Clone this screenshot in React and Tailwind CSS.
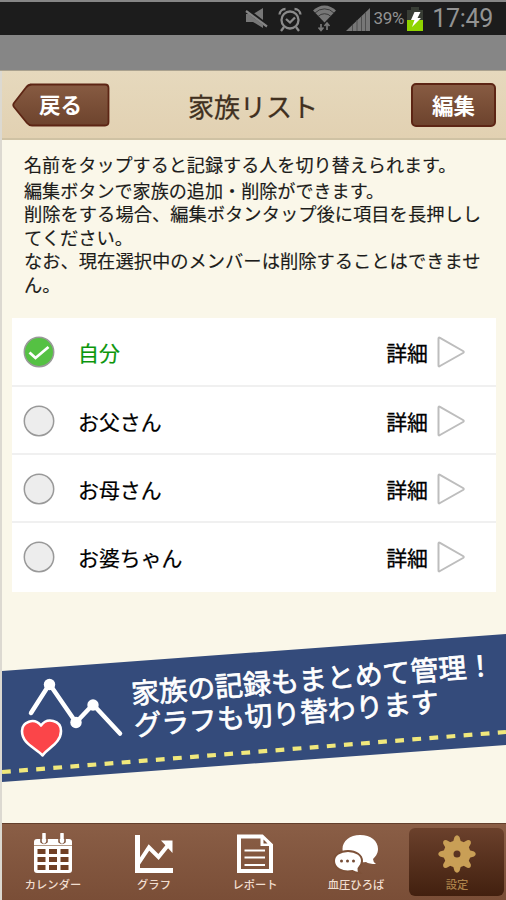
import React from "react";

const MEMBERS = [
  { name: "自分", selected: true },
  { name: "お父さん" },
  { name: "お母さん" },
  { name: "お婆ちゃん" },
];

function StatusBar() {
  return (
    <div className="mt-[2px] flex h-[33px] items-center justify-end bg-[#1c1c1c] pr-[13px] font-[Roboto,sans-serif] text-[#939393]">
      <svg width="128" height="33" viewBox="243 2 128 33" className="mr-[1px] shrink-0" fill="none">
        <path d="M244 14h7l10-6v20l-10-6h-7z" fill="#777" />
        <path d="M244 9.500l21 16" stroke="#1c1c1c" strokeWidth="4" />
        <path d="M244 11l21 15.500" stroke="#858585" strokeWidth="2.200" />
        <g stroke="#8a8a8a" strokeWidth="2.300">
          <circle cx="288" cy="20" r="8.500" />
          <path d="M277.500 14.500a6 6 0 0 1 6-5.500M292.500 9a6 6 0 0 1 6 5.500M282 27l-3 4M294 27l3 4M284 19l4 3.500l5-5" />
        </g>
        <path d="M311 10.500a16 16 0 0 1 23 0l-11.500 12z" fill="#777" />
        <path d="M313 13a13 13 0 0 1 19 0M316 16.500a9 9 0 0 1 13 0" stroke="#333" strokeWidth="0.900" />
        <path d="M319 24v6M316.500 27.500l2.500 3l2.500-3M325 30v-7M322.500 26l2.500-3l2.500 3" stroke="#777" strokeWidth="1.700" />
        <path d="M344 31L368 8v23z" fill="#777" />
        <path d="M350.500 25v6M355 20v11M359.500 16v15M363.500 12v19" stroke="#505050" strokeWidth="1" />
      </svg>
      <span className="text-[17px] leading-none tracking-[-0.3px]">39%</span>
      <svg width="18" height="28" viewBox="0 0 18 28" className="ml-[2px] mr-[8px] shrink-0">
        <path d="M5 2h8v3h4v10H1V5h4z" fill="#383d35" />
        <path d="M1 15h16v11H1z" fill="#8fd400" />
        <path d="M8.500 7h6l-3 6h3.500L6 22l2.500-7H5z" fill="#fff" />
      </svg>
      <span className="text-[25px] leading-none tracking-[-0.300px]">17:49</span>
    </div>
  );
}

function Header() {
  return (
    <header className="flex h-[69px] items-center justify-between border-b-2 border-[#cfc2a4] bg-gradient-to-b from-[#e6d9bd] to-[#e2d1b2] pl-[10px] pr-[10px]">
      <button className="relative flex h-[44px] w-[98px] items-center pb-[1px] pl-[27px] text-[21.500px] leading-none font-bold text-white">
        <svg className="absolute inset-0" width="98" height="44" viewBox="0 0 98 44">
          <defs>
            <linearGradient id="back" x1="0" y1="0" x2="0" y2="1">
              <stop offset="0" stopColor="#875b42" />
              <stop offset="1" stopColor="#6d432d" />
            </linearGradient>
          </defs>
          <path d="M18 1.500H93Q96.500 1.500 96.500 5V39Q96.500 42.500 93 42.500H20Q17 42.500 15 40L2 24Q.5 22 2 20L14 4.500Q16 1.500 20 1.500z" fill="url(#back)" stroke="#5d2514" strokeWidth="1.800" />
        </svg>
        <span className="relative">戻る</span>
      </button>
      <h1 className="mr-[15px] pt-[2px] text-[26px] leading-none text-[#40301f] [-webkit-text-stroke:0.3px]">家族リスト</h1>
      <button className="flex h-[44px] w-[85px] items-center justify-center rounded-[5px] border-2 border-[#5d2514] bg-gradient-to-b from-[#875b42] to-[#6d432d] text-[21.500px] leading-none font-bold text-white">
        編集
      </button>
    </header>
  );
}

function MemberRow({ name, selected }) {
  return (
    <li className="flex h-[68.300px] items-center border-b-2 border-[#f0f0f0] pt-[1px] pl-[11px] pr-[31px] last:border-white">
      <svg width="32" height="32" viewBox="0 0 32 32">
        <circle cx="16" cy="16" r="14.700" fill={selected ? "#55c143" : "#ededed"} stroke="#999" strokeWidth="1.500" />
        {selected && <path d="M6.500 16.500l6 5.500L25.500 11" fill="none" stroke="#fff" strokeWidth="2.800" />}
      </svg>
      <span className={"ml-[23px] pt-[1px] text-[20.900px] leading-none [-webkit-text-stroke:0.2px] " + (selected ? "text-[#0b960b]" : "text-black")}>{name}</span>
      <span className="ml-auto pt-[1px] text-[20.900px] leading-none text-black [-webkit-text-stroke:0.3px]">詳細</span>
      <svg width="28" height="32" viewBox="0 0 28 32" className="ml-[9px]">
        <path d="M1.500 2.500Q1.500 1 3 1.800L26 15Q27.500 16 26 17L3 30Q1.500 31 1.500 29.500z" fill="none" stroke="#bdbdbd" strokeWidth="2" />
      </svg>
    </li>
  );
}

function Banner() {
  return (
    <section className="relative mt-[42px] h-[149px] overflow-hidden">
      <svg className="absolute inset-0" width="504" height="149" viewBox="2 634 504 149">
        <path d="M2 671L506 634V745L2 782z" fill="#344b7b" />
        <path d="M2 772L506 732" stroke="#f0e87c" strokeWidth="4.200" strokeDasharray="8.800 8.350" />
        <path d="M31 713L49.500 684L76 722.500L93 704.500L120 733.500" fill="none" stroke="#fff" strokeWidth="4.500" strokeLinecap="round" />
        <g fill="#fff">
          <circle cx="49.500" cy="684.500" r="5.700" />
          <circle cx="76" cy="722.500" r="5.700" />
          <circle cx="93" cy="705" r="5.700" />
        </g>
        <path d="M42.500 755.500C36 748 22 744 22 731C22 722 34 717 41 725.500C47 717 61 720 61 731C61 743 48 748 42.500 755.500z" fill="#fb4549" stroke="#fff" strokeWidth="2.600" strokeLinejoin="round" />
      </svg>
      <div className="absolute top-[43px] left-[128px] origin-top-left -rotate-[4.500deg] text-[28px] leading-[31.500px] whitespace-nowrap text-white [-webkit-text-stroke:0.7px]">
        <p>家族の記録もまとめて管理！</p>
        <p className="text-[27.800px]">グラフも切り替わります</p>
      </div>
    </section>
  );
}

function CalendarIcon() {
  return (
    <svg width="40" height="42" viewBox="0 0 40 42">
      <path d="M4 6H36Q39 6 39 9V37Q39 40 36 40H4Q1 40 1 37V9Q1 6 4 6z" fill="#fff" />
      <path d="M1 12.500h38" stroke="#b59a86" strokeWidth="1" />
      <path d="M8 6v3q3 3 6 0V6M26 6v3q3 3 6 0V6" fill="none" stroke="#7d5138" strokeWidth="1.500" />
      <path d="M11 1v8M29 1v8" stroke="#fff" strokeWidth="3.500" strokeLinecap="round" />
      <path d="M4.500 16h8v5h-8zM16 16h8v5h-8zM27.500 16h8v5h-8zM4.500 24h8v5h-8zM16 24h8v5h-8zM27.500 24h8v5h-8zM4.500 32h8v5h-8zM16 32h8v5h-8zM27.500 32h8v5h-8z" fill="#704025" />
    </svg>
  );
}

function ChartIcon() {
  return (
    <svg width="40" height="42" viewBox="0 0 40 42" fill="none" stroke="#fff">
      <path d="M3.500 2V37.500H39" strokeWidth="5" />
      <path d="M4 31L15 14.500L24.500 24L35 11" strokeWidth="4" />
      <path d="M27 7.500H38.500V20z" fill="#fff" stroke="none" />
    </svg>
  );
}

function ReportIcon() {
  return (
    <svg width="40" height="42" viewBox="0 0 40 42" fill="none" stroke="#fff">
      <path d="M4 3.500H27L36 12V38H4z" strokeWidth="4" />
      <path d="M25.500 2V13H37z" fill="#fff" stroke="none" />
      <path d="M28.500 6.500v4h4z" fill="#7d5138" stroke="none" />
      <path d="M9.500 17.500H30M9.500 24.500H30M9.500 32H30" strokeWidth="2.200" />
    </svg>
  );
}

function ChatIcon() {
  return (
    <svg width="46" height="42" viewBox="0 0 46 42" fill="#fff">
      <path d="M27 2C38 2 45 8 45 16C45 21 42 24 40 26Q40 29 43 31Q36 31 33 29Q27 30 21 28C13 26 9.500 21 9.500 16C9.500 8 17 2 27 2z" />
      <path d="M15 18C23 18 29 22 29 28C29 31 28 33 25.500 35.500Q25 38 27 40Q22 40 19.500 38C9 40 1 35 1 28C1 22 7 18 15 18z" stroke="#7d5138" strokeWidth="2" />
      <g fill="#754c36">
        <circle cx="8.500" cy="28" r="1.500" />
        <circle cx="14.500" cy="28" r="1.500" />
        <circle cx="20.500" cy="28" r="1.500" />
      </g>
    </svg>
  );
}

function GearIcon() {
  const teeth = [0, 45, 90, 135, 180, 225, 270, 315];
  return (
    <svg width="40" height="42" viewBox="0 0 40 42" fill="#c99f56">
      {teeth.map((a) => (
        <path key={a} d="M15.500 11L17.500 4Q20 .5 22.500 4L24.500 11z" transform={`rotate(${a} 20 21)`} />
      ))}
      <circle cx="20" cy="21" r="8.500" fill="none" stroke="#c99f56" strokeWidth="10" />
    </svg>
  );
}

const TABS = [
  { label: "カレンダー", Icon: CalendarIcon },
  { label: "グラフ", Icon: ChartIcon },
  { label: "レポート", Icon: ReportIcon },
  { label: "血圧ひろば", Icon: ChatIcon },
  { label: "設定", Icon: GearIcon, active: true },
];

function TabBar() {
  return (
    <nav className="mt-auto h-[77px] border-t border-[#64402d] bg-gradient-to-b from-[#8a5e46] to-[#7a4e37]">
      <div className="grid h-full w-[505px] grid-cols-5">
        {TABS.map(({ label, Icon, active }) => (
          <div key={label} className="flex px-[3px] pt-[4px] pb-[4px]">
            <div
              className={
                "flex flex-1 flex-col items-center rounded-[6px] pt-[5px] pl-[1px] text-[11.300px] leading-none font-medium " +
                (active ? "bg-gradient-to-b from-[#6b412c] to-[#42200f] text-[#ac8149]" : "text-[#f1ded0]")
              }
            >
              <Icon />
              <span className="mt-[4px] whitespace-nowrap">{label}</span>
            </div>
          </div>
        ))}
      </div>
    </nav>
  );
}

export default function App() {
  return (
    <div className="h-[900px] w-[506px] overflow-hidden bg-[#dcd9d1] pl-[2px] font-['Noto_Sans_CJK_JP',sans-serif]">
      <div className="flex h-full flex-col bg-[#faf7e9]">
        <div className="-ml-[2px] h-[71px] shrink-0 overflow-hidden border-b border-[#aaa28f] bg-[#868686]">
          <StatusBar />
        </div>
        <Header />
        <div className="mt-[13px] pl-[22px] text-[18.300px] leading-[23.600px] whitespace-nowrap text-[#1c1c1a] [-webkit-text-stroke:0.15px]">
          <p className="mb-[2px] text-[18.100px]">名前をタップすると記録する人を切り替えられます。</p>
          <p className="text-[18.100px]">編集ボタンで家族の追加・削除ができます。</p>
          <p>
            削除をする場合、編集ボタンタップ後に項目を長押しし
            <br />
            てください。
          </p>
          <p>
            なお、現在選択中のメンバーは削除することはできませ
            <br />
            ん。
          </p>
        </div>
        <ul className="mt-[21px] ml-[10px] mr-[10px] bg-white pt-[1px]">
          {MEMBERS.map((m) => (
            <MemberRow key={m.name} {...m} />
          ))}
        </ul>
        <Banner />
        <TabBar />
      </div>
    </div>
  );
}
